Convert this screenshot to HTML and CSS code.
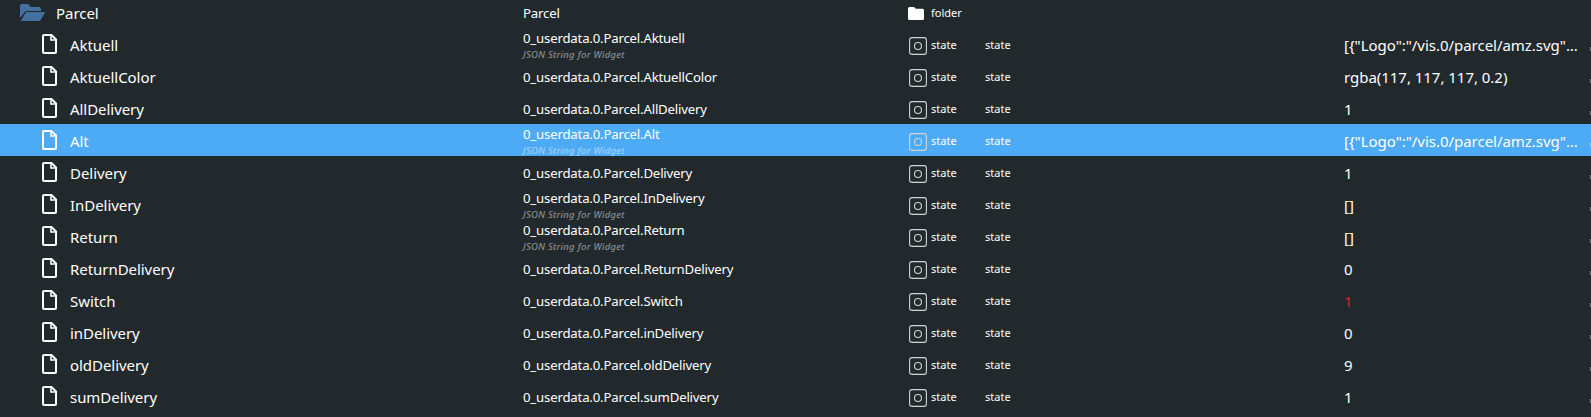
FILE: index.html
```html
<!DOCTYPE html>
<html lang="en">

<head>
    <meta charset="utf-8">
    <title>Objects</title>
    <link rel="stylesheet" href="styles.css">
</head>

<body>
    <svg class="sprite">
        <symbol id="file" viewBox="0 0 15 20">
            <path d="M2 1h7.5L14 5.5V18a1 1 0 0 1-1 1H2a1 1 0 0 1-1-1V2a1 1 0 0 1 1-1z" fill="none" stroke="currentColor" stroke-width="2" />
            <path d="M9 1v5h5" fill="none" stroke="currentColor" stroke-width="1.6" />
        </symbol>
        <symbol id="state" viewBox="0 0 18 18">
            <rect x=".6" y=".6" width="16.8" height="16.8" rx="2.5" fill="none" stroke="currentColor" stroke-width="1.1" />
            <circle cx="9" cy="9" r="3.5" fill="none" stroke="currentColor" stroke-width="1.1" />
        </symbol>
    </svg>
    <div class="tree" id="tree">
        <div class="row">
            <div class="name folder">
                <svg class="icon-open" viewBox="0 0 25 17">
                    <path d="M0 14V2a2 2 0 0 1 2-2h6l3 3h8a2 2 0 0 1 2 2v2H7a3 3 0 0 0-2.600 1.500z" />
                    <path d="M1 17l4.200-7.700A2.500 2.500 0 0 1 7.500 8H24q1.300 0 .6 1.200l-3.800 6.500A2.500 2.500 0 0 1 18.600 17z" />
                </svg>
                <span>Parcel</span>
            </div>
            <div class="id">Parcel</div>
            <div class="type">
                <svg class="icon-folder" viewBox="0 0 16 13">
                    <path d="M1.500 0H6l1.700 1.700h6.800A1.500 1.500 0 0 1 16 3.200v8.300a1.500 1.500 0 0 1-1.500 1.500h-13A1.500 1.500 0 0 1 0 11.500v-10A1.500 1.500 0 0 1 1.500 0z" />
                </svg>
                <span>folder</span>
            </div>
        </div>
    </div>
    <script src="tree.js"></script>
</body>

</html>
```

FILE: styles.css
```css
body {
    margin: 0;
    height: 417px;
    overflow: hidden;
    background-color: #22292c;
    color: #fff;
    font-family: "Noto Sans", sans-serif;
}

.sprite {
    display: none;
}

.tree {
    margin-top: -4px;
}

.row {
    display: grid;
    grid-template-columns: 523px 385px 77px 359px 246px 1px;
    grid-template-rows: 32px;
    align-items: center;
    height: 32px;
    white-space: nowrap;
}

.row.selected {
    background-color: #4dabf5;
}

.name {
    display: flex;
    align-items: center;
    padding-left: 42px;
    font-size: 15px;
    letter-spacing: -.05px;
}

.name span {
    margin-top: 2px;
}

.name.folder {
    padding-left: 20px;
}

.icon-file {
    width: 15px;
    height: 20px;
    margin-right: 13px;
}

.icon-open {
    width: 25px;
    height: 17px;
    margin-right: 11px;
    fill: #456f9f;
}

.id {
    padding-top: 2px;
    font-size: 13.2px;
    line-height: 17px;
    letter-spacing: -.18px;
}

.desc {
    margin: 1px 0 -1px;
    color: #fff;
    opacity: .5;
    font-size: 9.5px;
    font-style: italic;
    line-height: 13px;
    letter-spacing: .3px;
}

.type {
    display: flex;
    align-items: center;
    font-size: 11px;
}

.icon-folder {
    width: 16px;
    height: 13px;
    margin: 3px 7px 0 0;
    fill: #fff;
}

.icon-state {
    width: 18px;
    height: 18px;
    margin: 4px 4px 0 1px;
    color: #d3d4d5;
}

.role {
    font-size: 11px;
}

.value {
    padding-top: 1px;
    font-size: 15px;
    letter-spacing: -.03px;
}

.value.changed {
    color: #d3232a;
}

.edge {
    height: 4px;
    margin-top: 10px;
    background-color: #777c7e;
}

.selected .edge {
    background-color: #7fd0f8;
}
```

FILE: tree.js
```js
var parcels = [
    { name: 'Aktuell', desc: true, value: '[{"Logo":"/vis.0/parcel/amz.svg"...' },
    { name: 'AktuellColor', value: 'rgba(117, 117, 117, 0.2)' },
    { name: 'AllDelivery', value: '1' },
    { name: 'Alt', desc: true, value: '[{"Logo":"/vis.0/parcel/amz.svg"...', selected: true },
    { name: 'Delivery', value: '1' },
    { name: 'InDelivery', desc: true, value: '[]' },
    { name: 'Return', desc: true, value: '[]' },
    { name: 'ReturnDelivery', value: '0' },
    { name: 'Switch', value: '1', changed: true },
    { name: 'inDelivery', value: '0' },
    { name: 'oldDelivery', value: '9' },
    { name: 'sumDelivery', value: '1' }
];

var tree = document.getElementById('tree');
parcels.forEach(function (p) {
    var row = document.createElement('div');
    row.className = p.selected ? 'row selected' : 'row';
    row.innerHTML = `
        <div class="name"><svg class="icon-file"><use href="#file"/></svg><span>${p.name}</span></div>
        <div class="id">0_userdata.0.Parcel.${p.name}${p.desc ? '<div class="desc">JSON String for Widget</div>' : ''}</div>
        <div class="type"><svg class="icon-state"><use href="#state"/></svg><span>state</span></div>
        <div class="role">state</div>
        <div class="value${p.changed ? ' changed' : ''}">${p.value}</div>
        <div class="edge"></div>`;
    tree.appendChild(row);
});
```
